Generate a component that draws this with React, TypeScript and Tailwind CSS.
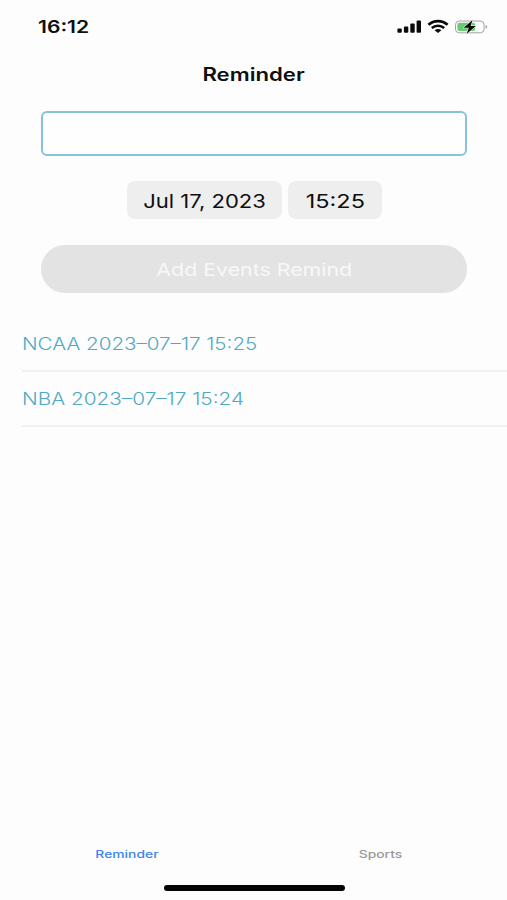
import React, { useState } from 'react';

interface Reminder {
  id: string;
  label: string;
  scale: string;
}

const reminders: Reminder[] = [
  { id: '1', label: 'NCAA 2023–07–17 15:25', scale: 'scale-x-[1.21]' },
  { id: '2', label: 'NBA 2023–07–17 15:24', scale: 'scale-x-[1.22]' },
];

const StatusIcons: React.FC = () => (
  <svg width="92" height="16" viewBox="0 0 92 16" className="block">
    {/* Signal */}
    <g fill="#0a0a0a">
      <rect x="0.4" y="9.4" width="4.4" height="4.4" rx="1" />
      <rect x="6.9" y="7.4" width="4.4" height="6.4" rx="1" />
      <rect x="13.3" y="4.6" width="4.4" height="9.2" rx="1" />
      <rect x="19.6" y="1.6" width="4.4" height="12.2" rx="1" />
    </g>
    {/* Wifi */}
    <g fill="none" stroke="#0a0a0a" strokeWidth="2.6">
      <path d="M31.4 5.8 C37 0.9 45 0.9 50.6 5.8" />
      <path d="M34.8 9 C38.4 5.9 43.6 5.9 47.2 9" />
    </g>
    <path d="M37.6 11.2 C39.6 9.5 42.4 9.5 44.4 11.2 L41 13.9 Z" fill="#0a0a0a" />
    {/* Battery */}
    <rect x="58.5" y="2" width="28.6" height="11.8" rx="3.8" fill="none" stroke="#a3a3a3" strokeWidth="1" />
    <rect x="60.4" y="3.8" width="17.8" height="8.2" rx="2" fill="#67cd72" />
    <path d="M88.6 6 C90.8 6.6 90.8 9.2 88.6 9.8 Z" fill="#a3a3a3" />
    <path d="M75.6 1 L66.6 8.7 H71.8 L69.6 15 L78.8 7 H73.6 Z" fill="#0a0a0a" stroke="#fdfdfd" strokeWidth="1" paintOrder="stroke" />
  </svg>
);

const App: React.FC = () => {
  const [title, setTitle] = useState('');
  const [activeTab, setActiveTab] = useState('Reminder');

  return (
    <div className="flex h-[900px] w-[507px] flex-col overflow-hidden bg-[#fdfdfd] font-['Inter',sans-serif] text-[#0f0f0f]">
      {/* Status bar */}
      <div className="flex h-[53px] items-center justify-between pl-[38px] pr-[18px]">
        <span className="origin-left scale-x-[1.24] pt-[2px] text-[17px] font-semibold">16:12</span>
        <StatusIcons />
      </div>

      <h1 className="flex h-[42px] items-center justify-center pl-px text-[18px] font-semibold">
        <span className="scale-x-[1.23]">Reminder</span>
      </h1>

      {/* Form */}
      <div className="mt-4 pl-[42px] pr-[40px]">
        <input
          value={title}
          onChange={(e) => setTitle(e.target.value)}
          className="-ml-px block h-[45px] w-[426px] rounded-md border-2 border-[#86c3d6] bg-[#fefefe] px-3 text-lg outline-none"
        />
        <div className="mt-[25px] flex justify-center gap-[6px] text-[18.5px]">
          <button className="flex h-[38px] w-[155px] items-center justify-center rounded-lg bg-[#eeeeee] pt-[3px] whitespace-nowrap">
            <span className="scale-x-[1.19]">Jul 17, 2023</span>
          </button>
          <button className="flex h-[38px] w-[94px] items-center justify-center rounded-lg bg-[#eeeeee] pt-[3px]">
            <span className="scale-x-[1.27]">15:25</span>
          </button>
        </div>
        <button className="-ml-px mt-[26px] flex h-[48px] w-[426px] items-center justify-center rounded-full bg-[#e3e3e3] pt-[2px] text-[17.5px] text-[#f8f8f8]">
          <span className="scale-x-[1.22]">Add Events Remind</span>
        </button>
      </div>

      {/* Reminder list */}
      <ul className="mt-[23px] flex-1 pl-[22px]">
        {reminders.map((item) => (
          <li key={item.id} className="flex h-[55.5px] items-center border-b-2 border-[#f1f1f1] pt-[3px] text-[17px] font-light text-[#4fa9c4]">
            <span className={`origin-left whitespace-nowrap ${item.scale}`}>{item.label}</span>
          </li>
        ))}
      </ul>

      {/* Tab bar */}
      <nav className="grid h-[61px] grid-cols-2 text-[10.5px] font-medium">
        {['Reminder', 'Sports'].map((tab) => (
          <button
            key={tab}
            onClick={() => setActiveTab(tab)}
            className={`flex h-[32px] items-center justify-center pt-[2px] ${activeTab === tab ? 'text-[#3f82f0]' : 'text-[#999999]'}`}
          >
            <span className="scale-x-[1.32]">{tab}</span>
          </button>
        ))}
      </nav>
      <div className="ml-[164px] -mt-[14px] mb-[9px] h-[6px] w-[181px] shrink-0 rounded-full bg-[#050505]" />
    </div>
  );
};

export default App;
